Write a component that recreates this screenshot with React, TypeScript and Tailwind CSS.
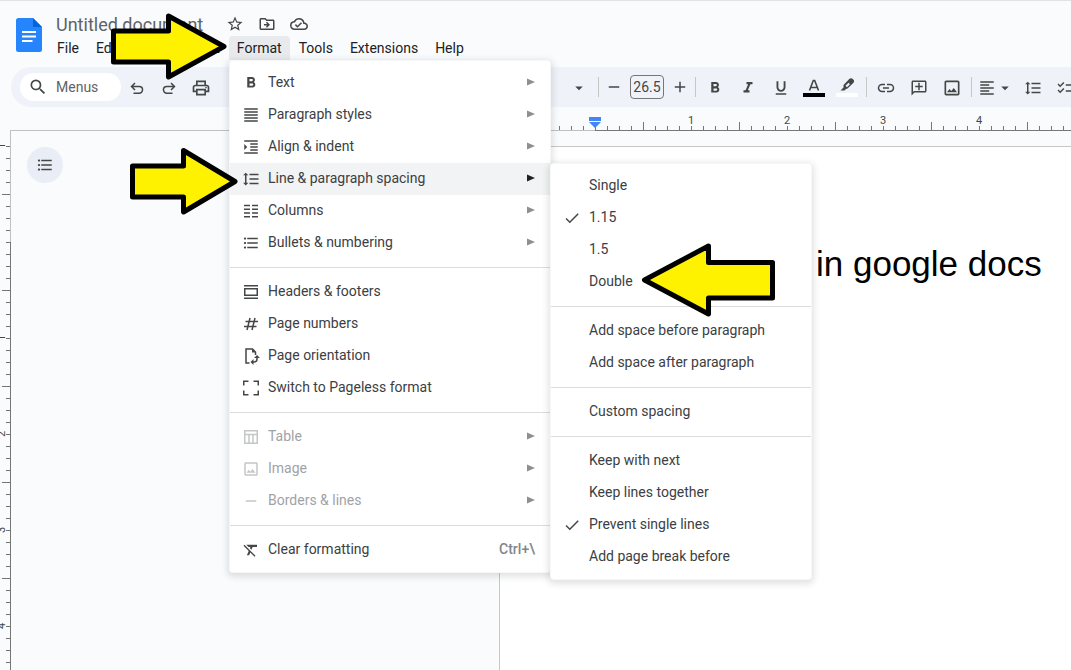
import type { ReactNode } from "react";
import type { IconType } from "react-icons";
import {
  MdAdd,
  MdArrowDropDown,
  MdCheck,
  MdChecklist,
  MdFormatAlignJustify,
  MdFormatAlignLeft,
  MdFormatBold,
  MdFormatClear,
  MdFormatIndentIncrease,
  MdFormatItalic,
  MdFormatLineSpacing,
  MdFormatListBulleted,
  MdFormatUnderlined,
  MdOutlineAddComment,
  MdOutlineCloudDone,
  MdOutlineDriveFileMove,
  MdOutlineImage,
  MdOutlinePrint,
  MdRemove,
  MdSearch,
  MdStarBorder,
} from "react-icons/md";

type menu_item = {
  label: string;
  icon?: ReactNode;
  submenu?: boolean;
  active?: boolean;
  disabled?: boolean;
  shortcut?: string;
};

const menuBar = ["File", "Edit", "View", "Insert", "Format", "Tools", "Extensions", "Help"];

const formatMenu: menu_item[][] = [
  [
    { label: "Text", icon: <MdFormatBold size={18} />, submenu: true },
    { label: "Paragraph styles", icon: <MdFormatAlignJustify size={18} />, submenu: true },
    { label: "Align & indent", icon: <MdFormatIndentIncrease size={18} />, submenu: true },
    {
      label: "Line & paragraph spacing",
      icon: <MdFormatLineSpacing size={18} />,
      submenu: true,
      active: true,
    },
    { label: "Columns", icon: <ColumnsIcon />, submenu: true },
    { label: "Bullets & numbering", icon: <MdFormatListBulleted size={18} />, submenu: true },
  ],
  [
    { label: "Headers & footers", icon: <HeadersIcon /> },
    { label: "Page numbers", icon: <HashIcon /> },
    { label: "Page orientation", icon: <OrientationIcon /> },
    { label: "Switch to Pageless format", icon: <PagelessIcon /> },
  ],
  [
    { label: "Table", icon: <TableIcon />, submenu: true, disabled: true },
    { label: "Image", icon: <MdOutlineImage size={18} />, submenu: true, disabled: true },
    { label: "Borders & lines", icon: <MdRemove size={18} />, submenu: true, disabled: true },
  ],
  [{ label: "Clear formatting", icon: <MdFormatClear size={18} />, shortcut: "Ctrl+\\" }],
];

const spacingMenu: menu_item[][] = [
  [
    { label: "Single" },
    { label: "1.15", icon: <MdCheck size={18} /> },
    { label: "1.5" },
    { label: "Double" },
  ],
  [{ label: "Add space before paragraph" }, { label: "Add space after paragraph" }],
  [{ label: "Custom spacing" }],
  [
    { label: "Keep with next" },
    { label: "Keep lines together" },
    { label: "Prevent single lines", icon: <MdCheck size={18} /> },
    { label: "Add page break before" },
  ],
];

export default function App() {
  return (
    <div className="relative flex h-screen flex-col overflow-hidden bg-[#f9fbfd] font-[Roboto,sans-serif] text-sm text-[#3c4043]">
      <Header />
      <Toolbar />
      <Workspace />
      <Menu className="left-[229px] top-[60px] w-[322px]" groups={formatMenu} label="Format" />
      <Menu
        className="left-[550px] top-[163px] w-[262px]"
        groups={spacingMenu}
        label="Line & paragraph spacing"
      />
      <Arrow
        className="left-[111px] top-[13px]"
        width={118}
        height={67}
        points="2.500,18 57.500,18 57.500,3 113,33.500 57.500,64 57.500,49 2.500,49"
      />
      <Arrow
        className="left-[130px] top-[148px]"
        width={110}
        height={67}
        points="2.500,18 53.500,18 53.500,2.500 105,33.500 53.500,64 53.500,49 2.500,49"
      />
      <Arrow
        className="left-[641px] top-[243px]"
        width={135}
        height={74}
        points="131.500,19.500 67.500,19.500 67.500,3 3.500,37 67.500,71 67.500,55 131.500,55"
      />
    </div>
  );
}

function Header() {
  return (
    <header className="flex h-[67px] shrink-0 border-t border-[#dfe3e1] pl-4">
      <svg className="mt-[17px] shrink-0" width="26" height="34" viewBox="0 0 26 34">
        <path
          d="M2.500 0H17l9 9v22.500a2.500 2.500 0 0 1-2.500 2.500h-21A2.500 2.500 0 0 1 0 31.500v-29A2.500 2.500 0 0 1 2.500 0z"
          fill="#2684fc"
        />
        <path d="M17 0l9 9h-9z" fill="#0066da" />
        <path d="M6 14h14M6 18.500h14M6 23h10.500" stroke="#fff" strokeWidth="2" />
      </svg>
      <div className="ml-[7px]">
        <div className="flex h-[35px] items-center pl-[7px] pt-3">
          <h1 className="w-[170px] text-lg text-[#5f6368]">Untitled document</h1>
          <div className="flex gap-[14px] pb-[2px] text-[#444746]">
            <IconButton label="Star" icon={MdStarBorder} />
            <IconButton label="Move" icon={MdOutlineDriveFileMove} />
            <IconButton label="Document status" icon={MdOutlineCloudDone} />
          </div>
        </div>
        <nav className="flex gap-px">
          {menuBar.map((item) => (
            <button
              className={`h-6 rounded-t px-2 text-[#202124] ${item === "Format" ? "bg-[#e8eaed]" : ""}`}
              key={item}
              type="button"
            >
              {item}
            </button>
          ))}
        </nav>
      </div>
    </header>
  );
}

function IconButton({ label, icon: Icon }: { label: string; icon: IconType }) {
  return (
    <button aria-label={label} type="button">
      <Icon size={18} />
    </button>
  );
}

function Toolbar() {
  return (
    <div className="ml-[11px] flex h-10 shrink-0 items-center overflow-hidden rounded-l-full bg-[#eff3f9] pl-[9px] text-[#444746]">
      <button
        className="flex h-7 w-[101px] shrink-0 items-center gap-2 rounded-full bg-white pl-2 text-[#5f6368]"
        type="button"
      >
        <MdSearch className="text-[#444746]" size={20} />
        Menus
      </button>
      <Tool label="Undo">
        <UndoIcon />
      </Tool>
      <Tool label="Redo">
        <UndoIcon className="-scale-x-100" />
      </Tool>
      <Tool label="Print">
        <MdOutlinePrint size={20} />
      </Tool>
      <div className="w-[346px] shrink-0" />
      <Tool label="Font">
        <MdArrowDropDown size={18} />
      </Tool>
      <Separator />
      <div className="flex shrink-0 items-center gap-1">
        <button aria-label="Decrease font size" className="flex h-6 w-6 items-center justify-center" type="button">
          <MdRemove size={18} />
        </button>
        <input
          aria-label="Font size"
          className="h-6 w-[34px] rounded border border-[#747775] bg-transparent text-center"
          defaultValue="26.5"
        />
        <button aria-label="Increase font size" className="flex h-6 w-6 items-center justify-center" type="button">
          <MdAdd size={18} />
        </button>
      </div>
      <Separator />
      <div className="flex shrink-0 gap-px">
        <Tool label="Bold">
          <MdFormatBold size={18} />
        </Tool>
        <Tool label="Italic">
          <MdFormatItalic size={18} />
        </Tool>
        <Tool label="Underline">
          <MdFormatUnderlined size={18} />
        </Tool>
        <Tool label="Text color">
          <TextColorIcon />
        </Tool>
        <Tool label="Highlight color">
          <HighlightIcon />
        </Tool>
      </div>
      <Separator />
      <div className="flex shrink-0 gap-px">
        <Tool label="Insert link">
          <LinkIcon />
        </Tool>
        <Tool label="Add comment">
          <MdOutlineAddComment className="-scale-x-100" size={18} />
        </Tool>
        <Tool label="Insert image">
          <MdOutlineImage size={20} />
        </Tool>
      </div>
      <Separator />
      <button
        aria-label="Align"
        className="flex h-8 w-[42px] shrink-0 items-center justify-center pt-[2px]"
        type="button"
      >
        <MdFormatAlignLeft className="shrink-0" size={18} />
        <MdArrowDropDown className="shrink-0" size={18} />
      </button>
      <Tool label="Line spacing">
        <MdFormatLineSpacing size={18} />
      </Tool>
      <Tool label="Checklist">
        <MdChecklist size={18} />
      </Tool>
    </div>
  );
}

function Tool({ label, children }: { label: string; children: ReactNode }) {
  return (
    <button
      aria-label={label}
      className="flex h-8 w-8 shrink-0 items-center justify-center pt-[2px]"
      type="button"
    >
      {children}
    </button>
  );
}

function Separator() {
  return <span className="mx-[3px] h-5 w-px shrink-0 bg-[#c7c7c7]" />;
}

function Workspace() {
  return (
    <main className="flex min-h-0 flex-1">
      <VerticalRuler />
      <div className="flex min-w-0 flex-1 flex-col">
        <HorizontalRuler />
        <div className="flex min-h-0 flex-1">
          <aside className="w-[488px] shrink-0 pl-4 pt-4">
            <button
              aria-label="Show document outline"
              className="flex h-9 w-9 items-center justify-center rounded-full bg-[#e9eef6] text-[#444746]"
              type="button"
            >
              <MdFormatListBulleted size={18} />
            </button>
          </aside>
          <article className="mt-[15px] min-w-0 flex-1 border-l border-t border-[#c7c7c7] bg-white pl-[316px] pt-24">
            <p className="whitespace-nowrap font-[Liberation_Sans,sans-serif] text-[35px] leading-[42px] text-black">
              in google docs
            </p>
          </article>
        </div>
      </div>
    </main>
  );
}

function HorizontalRuler() {
  return (
    <div className="flex h-6 shrink-0">
      <div className="w-[488px] shrink-0 border-b border-[#c0c0c0]" />
      <div className="relative grid min-w-0 flex-1 overflow-hidden">
        <div className="flex pl-36 pt-2 text-[11px] leading-3 text-[#444746] [grid-area:1/1]">
          {[1, 2, 3, 4].map((inch) => (
            <span className="w-24 shrink-0 text-center" key={inch}>
              {inch}
            </span>
          ))}
        </div>
        <div className="flex items-end pb-px [grid-area:1/1]">
          {Array.from({ length: 60 }, (_, i) => (
            <span
              className={`w-3 shrink-0 border-l border-[#747775] ${i % 8 === 4 ? "h-2" : "h-1"}`}
              key={i}
            />
          ))}
        </div>
        <div className="flex [grid-area:1/1]">
          <span className="w-24 shrink-0 border-b border-[#c0c0c0]" />
          <span className="flex-1 border-b border-[#747775]" />
        </div>
        <svg className="absolute left-[90px] top-[10px]" width="12" height="12">
          <path d="M0 0h12v4H0zM0 5h12l-6 6z" fill="#4285f4" />
        </svg>
      </div>
    </div>
  );
}

function VerticalRuler() {
  return (
    <div className="mt-[23px] grid w-[11px] shrink-0 overflow-hidden">
      <div className="flex flex-col text-[11px] leading-3 text-[#444746] [grid-area:1/1]">
        <RulerLabel className="h-8">1</RulerLabel>
        <span className="h-32 shrink-0" />
        {[1, 2, 3, 4].map((inch) => (
          <RulerLabel className="h-24" key={inch}>
            {inch}
          </RulerLabel>
        ))}
      </div>
      <div className="flex flex-col items-end pr-px pt-4 [grid-area:1/1]">
        {Array.from({ length: 60 }, (_, i) => (
          <span
            className={`h-3 shrink-0 border-t border-[#747775] ${i % 8 === 4 ? "w-2" : "w-1"}`}
            key={i}
          />
        ))}
      </div>
      <div className="flex flex-col [grid-area:1/1]">
        <span className="h-28 shrink-0 border-r border-[#c0c0c0]" />
        <span className="flex-1 border-r border-[#747775]" />
      </div>
    </div>
  );
}

function RulerLabel({ className, children }: { className: string; children: ReactNode }) {
  return (
    <span className={`flex w-1 shrink-0 items-center justify-center ${className}`}>
      <span className="-rotate-90">{children}</span>
    </span>
  );
}

function Menu({
  className,
  groups,
  label,
}: {
  className: string;
  groups: menu_item[][];
  label: string;
}) {
  return (
    <div
      aria-label={label}
      className={`absolute rounded border border-[#00000008] bg-white py-[6px] shadow-[0_2px_6px_2px_rgba(60,64,67,0.15)] ${className}`}
      role="menu"
    >
      {groups.map((items, index) => (
        <div className={index > 0 ? "mt-2 border-t border-[#dadce0] pt-2" : ""} key={items[0].label}>
          {items.map((item) => (
            <MenuRow item={item} key={item.label} />
          ))}
        </div>
      ))}
    </div>
  );
}

function MenuRow({ item }: { item: menu_item }) {
  return (
    <button
      className={`flex h-8 w-full items-center gap-2 pb-[2px] pl-3 pr-[15px] text-left ${item.active ? "bg-[#f1f3f4]" : ""} ${item.disabled ? "text-[#9fa3a8]" : "text-[#3c4043]"}`}
      disabled={item.disabled}
      role="menuitem"
      type="button"
    >
      <span
        className={`flex w-[18px] justify-center pt-[2px] ${item.disabled ? "text-[#c4c7c5]" : "text-[#444746]"}`}
      >
        {item.icon}
      </span>
      <span className="flex-1">{item.label}</span>
      {item.submenu && (
        <svg
          className={item.active ? "text-[#202124]" : "text-[#8f8f8f]"}
          width="8"
          height="8"
          viewBox="0 0 8 8"
        >
          <path d="M0 0.500L8 4L0 7.500z" fill="currentColor" />
        </svg>
      )}
      {item.shortcut && <span className="font-medium text-[#80868b]">{item.shortcut}</span>}
    </button>
  );
}

function Arrow({
  className,
  width,
  height,
  points,
}: {
  className: string;
  width: number;
  height: number;
  points: string;
}) {
  return (
    <svg className={`absolute ${className}`} width={width} height={height}>
      <polygon points={points} fill="#fff200" stroke="#000" strokeWidth="5" strokeLinejoin="round" />
    </svg>
  );
}

function UndoIcon({ className = "" }: { className?: string }) {
  return (
    <svg
      className={className}
      width="18"
      height="18"
      viewBox="0 0 18 18"
      fill="none"
      stroke="currentColor"
      strokeWidth="1.500"
    >
      <path d="M7 4L3.500 7.500L7 11M4 7.500h7.200a3.300 3.300 0 0 1 0 6.700H5.500" />
    </svg>
  );
}

function TextColorIcon() {
  return (
    <svg width="22" height="22" viewBox="0 0 22 22">
      <path
        d="M6.500 13.500L10.300 3.500h1.400l3.800 10M8 10.500h6"
        fill="none"
        stroke="currentColor"
        strokeWidth="1.600"
      />
      <path d="M0 16h22v4H0z" fill="#000" />
    </svg>
  );
}

function HighlightIcon() {
  return (
    <svg width="22" height="22" viewBox="0 0 22 22">
      <path
        d="M7.500 8L13 2.200Q15 0.500 17 2.200T17.300 6L11.500 11.500L10 12L8.500 13.500H4.500L7.500 10.500z"
        fill="currentColor"
      />
      <path d="M9.500 8.800l3-3 1.500 1.500-3 3z" fill="#eff3f9" />
      <path d="M0 16h22v4H0z" fill="#fff" />
    </svg>
  );
}

function LinkIcon() {
  return (
    <svg width="18" height="18" viewBox="0 0 18 18" fill="none" stroke="currentColor" strokeWidth="1.500">
      <path d="M8 5.500H5a3.500 3.500 0 0 0 0 7h3M10 5.500h3a3.500 3.500 0 0 1 0 7h-3M6 9h6" />
    </svg>
  );
}

function HashIcon() {
  return (
    <svg width="18" height="18" viewBox="0 0 18 18" fill="none" stroke="currentColor" strokeWidth="1.500">
      <path d="M8 3L5 15M13 3l-3 12M3.500 6.500h12.500M2 11.500h12.500" />
    </svg>
  );
}

function ColumnsIcon() {
  return (
    <svg width="18" height="18" viewBox="0 0 18 18" stroke="currentColor" strokeWidth="1.500">
      <path d="M2 3.500h6M2 7.250h6M2 11h6M2 14.750h6M10 3.500h6M10 7.250h6M10 11h6M10 14.750h6" />
    </svg>
  );
}

function HeadersIcon() {
  return (
    <svg width="18" height="18" viewBox="0 0 18 18" fill="none" stroke="currentColor" strokeWidth="1.500">
      <path d="M2 2.750h14M2 15.250h14M2.750 5.750h12.500v6.500H2.750z" />
    </svg>
  );
}

function OrientationIcon() {
  return (
    <svg width="18" height="18" viewBox="0 0 18 18" fill="none" stroke="currentColor" strokeWidth="1.500">
      <path d="M7.500 16H4V2h6.500L13.500 5v3" />
      <path d="M10 1.500v4h4z" fill="currentColor" stroke="none" />
      <path d="M15 10.500v1.500a3 3 0 0 1-3 3h-2" />
      <path d="M12 11l3-3 3 3zM11.500 12v6l-3-3z" fill="currentColor" stroke="none" />
    </svg>
  );
}

function PagelessIcon() {
  return (
    <svg width="18" height="18" viewBox="0 0 18 18" fill="none" stroke="currentColor" strokeWidth="1.500">
      <path d="M1.750 6.500V2.250H6.500M11.500 2.250h4.750V6.500M16.250 11.500v4.250H11.500M6.500 15.750H1.750V11.500" />
    </svg>
  );
}

function TableIcon() {
  return (
    <svg width="18" height="18" viewBox="0 0 18 18" fill="none" stroke="currentColor" strokeWidth="1.500">
      <path d="M2.750 2.750h12.500v12.500H2.750zM2.750 6.500h12.500M7 6.500v9M11 6.500v9" />
    </svg>
  );
}
